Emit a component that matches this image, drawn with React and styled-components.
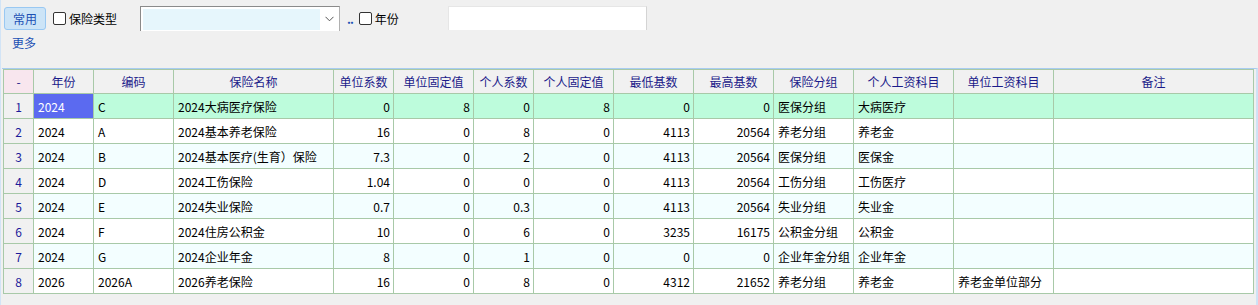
import React from 'react';
import styled, { createGlobalStyle } from 'styled-components';

const GlobalStyle = createGlobalStyle`
    html, body {
        margin: 0;
        padding: 0;
        background: #f0f0f0;
    }
    body {
        font-family: "Noto Sans CJK SC", "Noto Sans", sans-serif;
        font-size: 12px;
        color: #000;
    }
`;

const columns = [
    { key: 'no', title: '-', width: 30, align: 'center' },
    { key: 'year', title: '年份', width: 60 },
    { key: 'code', title: '编码', width: 80 },
    { key: 'name', title: '保险名称', width: 160 },
    { key: 'unitRate', title: '单位系数', width: 60, align: 'right' },
    { key: 'unitFixed', title: '单位固定值', width: 80, align: 'right' },
    { key: 'personRate', title: '个人系数', width: 60, align: 'right' },
    { key: 'personFixed', title: '个人固定值', width: 80, align: 'right' },
    { key: 'minBase', title: '最低基数', width: 80, align: 'right' },
    { key: 'maxBase', title: '最高基数', width: 80, align: 'right' },
    { key: 'group', title: '保险分组', width: 80 },
    { key: 'personItem', title: '个人工资科目', width: 100 },
    { key: 'unitItem', title: '单位工资科目', width: 100 },
    { key: 'memo', title: '备注', width: 200 },
];

const rows = [
    ['1', '2024', 'C', '2024大病医疗保险', '0', '8', '0', '8', '0', '0', '医保分组', '大病医疗', '', ''],
    ['2', '2024', 'A', '2024基本养老保险', '16', '0', '8', '0', '4113', '20564', '养老分组', '养老金', '', ''],
    ['3', '2024', 'B', '2024基本医疗(生育）保险', '7.3', '0', '2', '0', '4113', '20564', '医保分组', '医保金', '', ''],
    ['4', '2024', 'D', '2024工伤保险', '1.04', '0', '0', '0', '4113', '20564', '工伤分组', '工伤医疗', '', ''],
    ['5', '2024', 'E', '2024失业保险', '0.7', '0', '0.3', '0', '4113', '20564', '失业分组', '失业金', '', ''],
    ['6', '2024', 'F', '2024住房公积金', '10', '0', '6', '0', '3235', '16175', '公积金分组', '公积金', '', ''],
    ['7', '2024', 'G', '2024企业年金', '8', '0', '1', '0', '0', '0', '企业年金分组', '企业年金', '', ''],
    ['8', '2026', '2026A', '2026养老保险', '16', '0', '8', '0', '4312', '21652', '养老分组', '养老金', '养老金单位部分', ''],
];

function App() {
    return (
        <Page>
            <GlobalStyle />
            <Toolbar>
                <FilterRow>
                    <TabButton>常用</TabButton>
                    <CheckLabel>
                        <CheckBox />
                        保险类型
                    </CheckLabel>
                    <Select>
                        <SelectField />
                        <SelectArrow>
                            <svg width="9" height="6" viewBox="0 0 9 6">
                                <path d="M0.5 0.8 L4.5 4.8 L8.5 0.8" fill="none" stroke="#555" strokeWidth="1" />
                            </svg>
                        </SelectArrow>
                    </Select>
                    <RangeDots>..</RangeDots>
                    <CheckLabel>
                        <CheckBox />
                        年份
                    </CheckLabel>
                    <TextInput />
                </FilterRow>
                <MoreLink>更多</MoreLink>
            </Toolbar>

            <GridPanel>
                <Grid>
                    {columns.map((c, i) => (
                        <HeadCell key={c.key} $corner={i === 0}>{c.title}</HeadCell>
                    ))}
                    {rows.map((row, r) => (
                        row.map((v, i) => {
                            const col = columns[i];
                            if (i === 0) {
                                return <RowNo key={r + '-no'}>{v}</RowNo>;
                            }
                            return (
                                <Cell
                                    key={r + '-' + i}
                                    $align={col.align}
                                    $active={r === 0}
                                    $alt={r % 2 === 0}
                                    $focus={r === 0 && i === 1}
                                >
                                    {v}
                                </Cell>
                            );
                        })
                    ))}
                </Grid>
            </GridPanel>
        </Page>
    );
}

export default App;

const Page = styled.div`
    width: 1258px;
    height: 305px;
    box-sizing: border-box;
    border-left: 1px solid #d2e4f6;
    padding-left: 1px;
    display: flex;
    flex-direction: column;
    overflow: hidden;
`;

const Toolbar = styled.div`
    height: 68px;
    box-sizing: border-box;
    padding: 6px 0 0 2px;
    display: flex;
    flex-direction: column;
`;

const FilterRow = styled.div`
    display: flex;
    align-items: center;
    height: 25px;
`;

const TabButton = styled.div`
    width: 42px;
    height: 23px;
    box-sizing: border-box;
    border: 1px solid #99c8f2;
    border-radius: 3px;
    background: #cce4f7;
    color: #1c50b4;
    display: flex;
    align-items: center;
    justify-content: center;
    margin-right: 7px;
`;

const CheckLabel = styled.label`
    display: flex;
    align-items: center;
    gap: 3px;
    color: #000;
    white-space: nowrap;
`;

const CheckBox = styled.span`
    display: inline-block;
    width: 13px;
    height: 13px;
    box-sizing: border-box;
    border: 1px solid #333;
    border-radius: 2px;
    background: #fff;
`;

const Select = styled.div`
    margin-left: 23px;
    width: 200px;
    height: 25px;
    box-sizing: border-box;
    border: 1px solid #8a8a8a;
    border-bottom: none;
    border-right-color: #b0b0b0;
    background: #fff;
    display: flex;
    padding: 2px 0 0 2px;
    align-self: flex-start;
`;

const SelectField = styled.div`
    width: 177px;
    height: 21px;
    background: #e6f6fc;
`;

const SelectArrow = styled.div`
    flex: 1;
    display: flex;
    align-items: center;
    justify-content: center;
    padding-bottom: 2px;
`;

const RangeDots = styled.span`
    color: #1c50b4;
    font-weight: bold;
    margin: 0 6px 0 7px;
    letter-spacing: -1px;
`;

const TextInput = styled.div`
    margin-left: 49px;
    width: 199px;
    height: 24px;
    box-sizing: border-box;
    background: #fff;
    border: 1px solid #e6e6e6;
    border-right-color: #d4d4d4;
    border-bottom: none;
    align-self: flex-start;
`;

const MoreLink = styled.div`
    color: #1c50b4;
    margin: 3px 0 0 8px;
`;

const GridPanel = styled.div`
    flex: 1;
    border-top: 1px solid #a8ccf0;
    border-right: 2px solid #cfe2f5;
    padding-left: 1px;
`;

const Grid = styled.div`
    display: grid;
    grid-template-columns: ${columns.map(c => c.width + 'px').join(' ')};
    grid-template-rows: 24px;
    grid-auto-rows: 25px;
    width: max-content;
    border-left: 1px solid #a8c9a8;
    border-top: 1px solid #a8c9a8;
`;

const BaseCell = styled.div`
    box-sizing: border-box;
    border-right: 1px solid #a8c9a8;
    border-bottom: 1px solid #a8c9a8;
    display: flex;
    align-items: center;
    white-space: nowrap;
    overflow: hidden;
`;

const HeadCell = styled(BaseCell)`
    justify-content: center;
    background: ${p => (p.$corner ? '#f8e6ee' : '#f1f1f1')};
    color: #1b1b8a;
`;

const RowNo = styled(BaseCell)`
    justify-content: center;
    background: #f1f1f1;
    color: #1b1b9a;
`;

const Cell = styled(BaseCell)`
    justify-content: ${p => (p.$align === 'right' ? 'flex-end' : 'flex-start')};
    padding: 0 3px 0 4px;
    background: ${p => (p.$focus ? '#5b6af0' : p.$active ? '#bdfcdc' : p.$alt ? '#f3feff' : '#fff')};
    color: ${p => (p.$focus ? '#fff' : '#000')};
`;
